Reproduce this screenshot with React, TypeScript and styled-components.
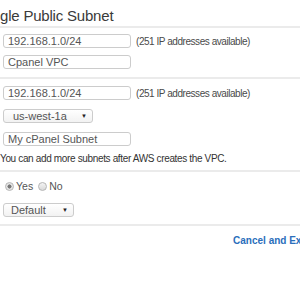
import styled, { createGlobalStyle } from "styled-components"

const Global = createGlobalStyle`
    html, body {
        margin: 0;
        padding: 0;
        background: #fff;
        overflow: hidden;
    }
    body {
        font-family: "Liberation Sans", Arial, sans-serif;
        color: #333;
    }
`

const Page = styled.div`
    width: 400px;
`

const Title = styled.h2`
    margin: 0;
    height: 28px;
    padding-top: 7px;
    box-sizing: border-box;
    font-size: 15px;
    letter-spacing: -0.2px;
    line-height: 18px;
    font-weight: normal;
    color: #3a3a3a;
    border-bottom: 2px solid #ebebeb;
    white-space: nowrap;
`

const Section = styled.section<{ $top: number; $bottom: number; $gap: number }>`
    display: flex;
    flex-direction: column;
    gap: ${(p) => p.$gap}px;
    padding: ${(p) => p.$top}px 0 ${(p) => p.$bottom}px 0;
    border-bottom: 2px solid #ebebeb;
`

const Row = styled.div`
    display: flex;
    align-items: center;
    gap: 5px;
    padding-left: 3px;
`

const TextBox = styled.div<{ $w: number }>`
    box-sizing: border-box;
    width: ${(p) => p.$w}px;
    height: 14px;
    border: 1px solid #ccc;
    border-radius: 3px;
    padding: 0 4px;
    font-size: 11px;
    line-height: 12px;
    color: #555;
    background: #fff;
    white-space: nowrap;
    overflow: hidden;
`

const Note = styled.span`
    font-size: 10px;
    letter-spacing: -0.45px;
    color: #4a4a4a;
    white-space: nowrap;
`

const Select = styled.div<{ $w: number; $indent: number }>`
    box-sizing: border-box;
    width: ${(p) => p.$w}px;
    height: 14px;
    display: flex;
    align-items: center;
    justify-content: space-between;
    padding: 0 5px 0 ${(p) => p.$indent}px;
    border: 1px solid #ccc;
    border-radius: 3px;
    background: linear-gradient(#fff, #f2f2f2);
    font-size: 11px;
    color: #555;
`

const Arrow = styled.span`
    font-size: 6px;
    color: #222;
`

const Help = styled.p`
    margin: -2px 0 0;
    font-size: 10px;
    letter-spacing: -0.35px;
    line-height: 12px;
    color: #333;
    white-space: nowrap;
`

const Radios = styled.div`
    display: flex;
    align-items: center;
    gap: 2px;
    padding-left: 5px;
    height: 12px;
    font-size: 10.5px;
    color: #555;
`

const RadioDot = styled.span<{ $on?: boolean }>`
    box-sizing: border-box;
    width: 9px;
    height: 9px;
    border-radius: 50%;
    border: 1px solid #b5b5b5;
    background: ${(p) =>
        p.$on
            ? "radial-gradient(circle, #777 0 1.8px, #e6e6e6 2.3px)"
            : "linear-gradient(#f4f4f4, #d9d9d9)"};
`

const RadioLabel = styled.span`
    margin-right: 3px;
`

const Footer = styled.div`
    display: flex;
    justify-content: flex-end;
    align-items: center;
    gap: 12px;
    padding-top: 7px;
    height: 14px;
`

const CancelLink = styled.a`
    font-size: 10px;
    font-weight: bold;
    color: #2a6ebb;
    text-decoration: none;
    white-space: nowrap;
`

const NextButton = styled.button`
    font-family: inherit;
    font-size: 10px;
    font-weight: bold;
    color: #fff;
    background: #f0a030;
    border: 1px solid #d08010;
    border-radius: 3px;
    padding: 2px 10px;
    margin-right: 4px;
    white-space: nowrap;
`

const App = () => {
    return (
        <Page>
            <Global />
            <Title>gle Public Subnet</Title>
            <Section $top={6} $bottom={8} $gap={7}>
                <Row>
                    <TextBox $w={128}>192.168.1.0/24</TextBox>
                    <Note>(251 IP addresses available)</Note>
                </Row>
                <Row>
                    <TextBox $w={128}>Cpanel VPC</TextBox>
                </Row>
            </Section>
            <Section $top={7} $bottom={5} $gap={9}>
                <Row>
                    <TextBox $w={128}>192.168.1.0/24</TextBox>
                    <Note>(251 IP addresses available)</Note>
                </Row>
                <Row>
                    <Select $w={90} $indent={9}>
                        us-west-1a
                        <Arrow>▼</Arrow>
                    </Select>
                </Row>
                <Row>
                    <TextBox $w={128}>My cPanel Subnet</TextBox>
                </Row>
                <Help>You can add more subnets after AWS creates the VPC.</Help>
            </Section>
            <Section $top={8} $bottom={7} $gap={11}>
                <Radios>
                    <RadioDot $on />
                    <RadioLabel>Yes</RadioLabel>
                    <RadioDot />
                    <RadioLabel>No</RadioLabel>
                </Radios>
                <Row>
                    <Select $w={71} $indent={7}>
                        Default
                        <Arrow>▼</Arrow>
                    </Select>
                </Row>
            </Section>
            <Footer>
                <CancelLink href="#">Cancel and Exit</CancelLink>
                <NextButton>Create VPC</NextButton>
            </Footer>
        </Page>
    )
}

export default App
